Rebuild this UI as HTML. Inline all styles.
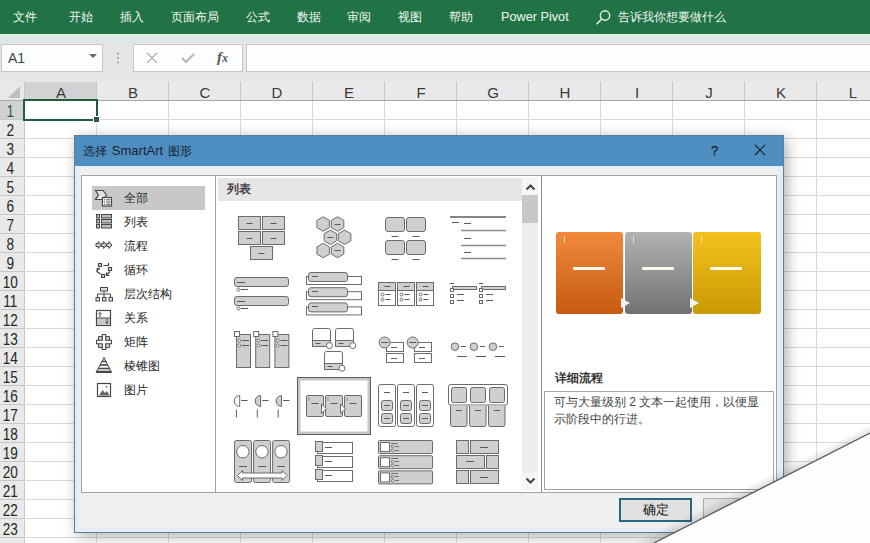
<!DOCTYPE html><html><head><meta charset="utf-8"><style>
*{margin:0;padding:0;box-sizing:border-box}
html,body{width:870px;height:543px;overflow:hidden;background:#fff}
body{position:relative;font-family:"Liberation Sans",sans-serif;color:#222}
.a{position:absolute}
.t{position:absolute;white-space:nowrap}
.rib span{position:absolute;top:9px;font-size:12px;line-height:16px;color:#f2f7f3;white-space:nowrap}
.box{position:absolute;background:#fbfdfe;border:1px solid #c6c6c6;border-top-color:#d4c4c2}
.ch{position:absolute;top:83px;height:18px;width:72px;text-align:center;font-size:15px;line-height:19px;color:#3a3a3a}
.rn{position:absolute;left:0;width:24px;text-align:center;font-size:16px;line-height:24px;color:#262626;transform:scaleX(0.85);transform-origin:0 0}
.cat{position:absolute;left:124px;font-size:12px;line-height:16px;color:#262626}
</style></head><body>
<div class="a" style="left:0;top:82px;width:870px;height:461px;background:#fff"></div>
<div class="a" style="left:0;top:82px;width:870px;height:18px;background:#e9e9e9"></div>
<div class="a" style="left:24px;top:82px;width:72px;height:18px;background:#d2d2d2"></div>
<div class="a" style="left:0;top:100px;width:870px;height:1px;background:#a9a9a9"></div>
<div class="a" style="left:0;top:101px;width:24px;height:442px;background:#e9e9e9"></div>
<div class="a" style="left:0;top:101px;width:24px;height:18px;background:#d2d2d2"></div>
<svg class="a" style="left:0;top:82px" width="24" height="18"><polygon points="20,4 20,16 8,16" fill="#bfbfbf"/></svg>
<div class="a" style="left:96px;top:82px;width:1px;height:18px;background:#c6c6c6"></div>
<div class="a" style="left:96px;top:101px;width:1px;height:442px;background:#d9d9d9"></div>
<div class="a" style="left:168px;top:82px;width:1px;height:18px;background:#c6c6c6"></div>
<div class="a" style="left:168px;top:101px;width:1px;height:442px;background:#d9d9d9"></div>
<div class="a" style="left:240px;top:82px;width:1px;height:18px;background:#c6c6c6"></div>
<div class="a" style="left:240px;top:101px;width:1px;height:442px;background:#d9d9d9"></div>
<div class="a" style="left:312px;top:82px;width:1px;height:18px;background:#c6c6c6"></div>
<div class="a" style="left:312px;top:101px;width:1px;height:442px;background:#d9d9d9"></div>
<div class="a" style="left:384px;top:82px;width:1px;height:18px;background:#c6c6c6"></div>
<div class="a" style="left:384px;top:101px;width:1px;height:442px;background:#d9d9d9"></div>
<div class="a" style="left:456px;top:82px;width:1px;height:18px;background:#c6c6c6"></div>
<div class="a" style="left:456px;top:101px;width:1px;height:442px;background:#d9d9d9"></div>
<div class="a" style="left:528px;top:82px;width:1px;height:18px;background:#c6c6c6"></div>
<div class="a" style="left:528px;top:101px;width:1px;height:442px;background:#d9d9d9"></div>
<div class="a" style="left:600px;top:82px;width:1px;height:18px;background:#c6c6c6"></div>
<div class="a" style="left:600px;top:101px;width:1px;height:442px;background:#d9d9d9"></div>
<div class="a" style="left:672px;top:82px;width:1px;height:18px;background:#c6c6c6"></div>
<div class="a" style="left:672px;top:101px;width:1px;height:442px;background:#d9d9d9"></div>
<div class="a" style="left:744px;top:82px;width:1px;height:18px;background:#c6c6c6"></div>
<div class="a" style="left:744px;top:101px;width:1px;height:442px;background:#d9d9d9"></div>
<div class="a" style="left:816px;top:82px;width:1px;height:18px;background:#c6c6c6"></div>
<div class="a" style="left:816px;top:101px;width:1px;height:442px;background:#d9d9d9"></div>
<div class="a" style="left:888px;top:82px;width:1px;height:18px;background:#c6c6c6"></div>
<div class="a" style="left:888px;top:101px;width:1px;height:442px;background:#d9d9d9"></div>
<div class="a" style="left:24px;top:82px;width:1px;height:461px;background:#c6c6c6"></div>
<div class="a" style="left:24px;top:119px;width:846px;height:1px;background:#d9d9d9"></div>
<div class="a" style="left:0;top:119px;width:24px;height:1px;background:#c6c6c6"></div>
<div class="a" style="left:24px;top:138px;width:846px;height:1px;background:#d9d9d9"></div>
<div class="a" style="left:0;top:138px;width:24px;height:1px;background:#c6c6c6"></div>
<div class="a" style="left:24px;top:157px;width:846px;height:1px;background:#d9d9d9"></div>
<div class="a" style="left:0;top:157px;width:24px;height:1px;background:#c6c6c6"></div>
<div class="a" style="left:24px;top:176px;width:846px;height:1px;background:#d9d9d9"></div>
<div class="a" style="left:0;top:176px;width:24px;height:1px;background:#c6c6c6"></div>
<div class="a" style="left:24px;top:195px;width:846px;height:1px;background:#d9d9d9"></div>
<div class="a" style="left:0;top:195px;width:24px;height:1px;background:#c6c6c6"></div>
<div class="a" style="left:24px;top:214px;width:846px;height:1px;background:#d9d9d9"></div>
<div class="a" style="left:0;top:214px;width:24px;height:1px;background:#c6c6c6"></div>
<div class="a" style="left:24px;top:233px;width:846px;height:1px;background:#d9d9d9"></div>
<div class="a" style="left:0;top:233px;width:24px;height:1px;background:#c6c6c6"></div>
<div class="a" style="left:24px;top:252px;width:846px;height:1px;background:#d9d9d9"></div>
<div class="a" style="left:0;top:252px;width:24px;height:1px;background:#c6c6c6"></div>
<div class="a" style="left:24px;top:271px;width:846px;height:1px;background:#d9d9d9"></div>
<div class="a" style="left:0;top:271px;width:24px;height:1px;background:#c6c6c6"></div>
<div class="a" style="left:24px;top:290px;width:846px;height:1px;background:#d9d9d9"></div>
<div class="a" style="left:0;top:290px;width:24px;height:1px;background:#c6c6c6"></div>
<div class="a" style="left:24px;top:309px;width:846px;height:1px;background:#d9d9d9"></div>
<div class="a" style="left:0;top:309px;width:24px;height:1px;background:#c6c6c6"></div>
<div class="a" style="left:24px;top:328px;width:846px;height:1px;background:#d9d9d9"></div>
<div class="a" style="left:0;top:328px;width:24px;height:1px;background:#c6c6c6"></div>
<div class="a" style="left:24px;top:347px;width:846px;height:1px;background:#d9d9d9"></div>
<div class="a" style="left:0;top:347px;width:24px;height:1px;background:#c6c6c6"></div>
<div class="a" style="left:24px;top:366px;width:846px;height:1px;background:#d9d9d9"></div>
<div class="a" style="left:0;top:366px;width:24px;height:1px;background:#c6c6c6"></div>
<div class="a" style="left:24px;top:385px;width:846px;height:1px;background:#d9d9d9"></div>
<div class="a" style="left:0;top:385px;width:24px;height:1px;background:#c6c6c6"></div>
<div class="a" style="left:24px;top:404px;width:846px;height:1px;background:#d9d9d9"></div>
<div class="a" style="left:0;top:404px;width:24px;height:1px;background:#c6c6c6"></div>
<div class="a" style="left:24px;top:423px;width:846px;height:1px;background:#d9d9d9"></div>
<div class="a" style="left:0;top:423px;width:24px;height:1px;background:#c6c6c6"></div>
<div class="a" style="left:24px;top:442px;width:846px;height:1px;background:#d9d9d9"></div>
<div class="a" style="left:0;top:442px;width:24px;height:1px;background:#c6c6c6"></div>
<div class="a" style="left:24px;top:461px;width:846px;height:1px;background:#d9d9d9"></div>
<div class="a" style="left:0;top:461px;width:24px;height:1px;background:#c6c6c6"></div>
<div class="a" style="left:24px;top:480px;width:846px;height:1px;background:#d9d9d9"></div>
<div class="a" style="left:0;top:480px;width:24px;height:1px;background:#c6c6c6"></div>
<div class="a" style="left:24px;top:499px;width:846px;height:1px;background:#d9d9d9"></div>
<div class="a" style="left:0;top:499px;width:24px;height:1px;background:#c6c6c6"></div>
<div class="a" style="left:24px;top:518px;width:846px;height:1px;background:#d9d9d9"></div>
<div class="a" style="left:0;top:518px;width:24px;height:1px;background:#c6c6c6"></div>
<div class="a" style="left:24px;top:537px;width:846px;height:1px;background:#d9d9d9"></div>
<div class="a" style="left:0;top:537px;width:24px;height:1px;background:#c6c6c6"></div>
<div class="ch" style="left:25px;color:#3a3a3a">A</div>
<div class="ch" style="left:97px;color:#3a3a3a">B</div>
<div class="ch" style="left:169px;color:#3a3a3a">C</div>
<div class="ch" style="left:241px;color:#3a3a3a">D</div>
<div class="ch" style="left:313px;color:#3a3a3a">E</div>
<div class="ch" style="left:385px;color:#3a3a3a">F</div>
<div class="ch" style="left:457px;color:#3a3a3a">G</div>
<div class="ch" style="left:529px;color:#3a3a3a">H</div>
<div class="ch" style="left:601px;color:#3a3a3a">I</div>
<div class="ch" style="left:673px;color:#3a3a3a">J</div>
<div class="ch" style="left:745px;color:#3a3a3a">K</div>
<div class="ch" style="left:817px;color:#3a3a3a">L</div>
<div class="rn" style="top:100px;height:19px;color:#2b5e40">1</div>
<div class="rn" style="top:119px;height:19px;color:#262626">2</div>
<div class="rn" style="top:138px;height:19px;color:#262626">3</div>
<div class="rn" style="top:157px;height:19px;color:#262626">4</div>
<div class="rn" style="top:176px;height:19px;color:#262626">5</div>
<div class="rn" style="top:195px;height:19px;color:#262626">6</div>
<div class="rn" style="top:214px;height:19px;color:#262626">7</div>
<div class="rn" style="top:233px;height:19px;color:#262626">8</div>
<div class="rn" style="top:252px;height:19px;color:#262626">9</div>
<div class="rn" style="top:271px;height:19px;color:#262626">10</div>
<div class="rn" style="top:290px;height:19px;color:#262626">11</div>
<div class="rn" style="top:309px;height:19px;color:#262626">12</div>
<div class="rn" style="top:328px;height:19px;color:#262626">13</div>
<div class="rn" style="top:347px;height:19px;color:#262626">14</div>
<div class="rn" style="top:366px;height:19px;color:#262626">15</div>
<div class="rn" style="top:385px;height:19px;color:#262626">16</div>
<div class="rn" style="top:404px;height:19px;color:#262626">17</div>
<div class="rn" style="top:423px;height:19px;color:#262626">18</div>
<div class="rn" style="top:442px;height:19px;color:#262626">19</div>
<div class="rn" style="top:461px;height:19px;color:#262626">20</div>
<div class="rn" style="top:480px;height:19px;color:#262626">21</div>
<div class="rn" style="top:499px;height:19px;color:#262626">22</div>
<div class="rn" style="top:518px;height:19px;color:#262626">23</div>
<div class="a" style="left:23px;top:99px;width:75px;height:22px;border:2px solid #245c3b"></div>
<div class="a" style="left:94px;top:117px;width:5px;height:5px;background:#245c3b;border:1px solid #fff;box-sizing:content-box;margin:-1px"></div>
<div class="a rib" style="left:0;top:0;width:870px;height:34px;background:#217346">
<span style="left:13px">文件</span>
<span style="left:69px">开始</span>
<span style="left:120px">插入</span>
<span style="left:171px">页面布局</span>
<span style="left:246px">公式</span>
<span style="left:297px">数据</span>
<span style="left:347px">审阅</span>
<span style="left:398px">视图</span>
<span style="left:449px">帮助</span>
<span style="left:501px;font-size:12.7px;top:9px">Power Pivot</span>
<span style="left:618px">告诉我你想要做什么</span>
</div>
<svg class="a" style="left:594px;top:9px" width="18" height="18" viewBox="0 0 18 18"><circle cx="11" cy="6.5" r="4.7" fill="none" stroke="#e8f4ec" stroke-width="1.4"/><line x1="7.7" y1="9.9" x2="2.6" y2="15.3" stroke="#e8f4ec" stroke-width="1.5"/></svg>
<div class="a" style="left:0;top:34px;width:870px;height:48px;background:#e6e6e6"></div>
<div class="a" style="left:0;top:34px;width:870px;height:2px;background:#dcefe0"></div>
<div class="a" style="left:0;top:36px;width:870px;height:2px;background:#e6e4ea"></div>
<div class="a" style="left:0;top:38px;width:870px;height:5px;background:#dde8e6"></div>
<div class="box" style="left:1px;top:44px;width:102px;height:28px"></div>
<div class="t" style="left:8px;top:50px;font-size:14px;line-height:16px;color:#444">A1</div>
<svg class="a" style="left:88px;top:53px" width="10" height="6"><polygon points="1,1 9,1 5,5" fill="#666"/></svg>
<svg class="a" style="left:115px;top:51px" width="6" height="14"><circle cx="3" cy="2.5" r="1" fill="#999"/><circle cx="3" cy="7" r="1" fill="#999"/><circle cx="3" cy="11.5" r="1" fill="#999"/></svg>
<div class="box" style="left:133px;top:44px;width:110px;height:28px"></div>
<svg class="a" style="left:145px;top:51px" width="14" height="14"><path d="M2 2 L12 12 M12 2 L2 12" stroke="#b5b5b5" stroke-width="1.5"/></svg>
<svg class="a" style="left:180px;top:51px" width="16" height="14"><path d="M2 7 L6 11 L14 3" fill="none" stroke="#b5b5b5" stroke-width="2"/></svg>
<div class="t" style="left:217px;top:49px;font-family:'Liberation Serif',serif;font-style:italic;font-weight:bold;font-size:15px;line-height:16px;color:#555">f<span style="font-size:12px">x</span></div>
<div class="box" style="left:246px;top:44px;width:630px;height:28px"></div>
<div class="a" style="left:74px;top:135px;width:710px;height:398px;background:#e4edf5;border:1px solid #5d7d98;box-shadow:3px 3px 14px rgba(0,0,0,0.32)"></div>
<div class="a" style="left:79px;top:168px;width:698px;height:360px;background:#f0f0f0"></div>
<div class="a" style="left:75px;top:136px;width:708px;height:30px;background:#4e8ec1"></div>
<div class="a" style="left:75px;top:166px;width:708px;height:1px;background:#e3f0f8"></div>
<div class="t" style="left:83px;top:142px;font-size:12px;line-height:17px;color:#1b2233;word-spacing:1.5px">选择 <span style="font-size:13px">SmartArt</span> 图形</div>
<div class="t" style="left:711px;top:142px;font-size:13px;line-height:17px;color:#1b2233;font-weight:normal;-webkit-text-stroke:0.3px #1b2233">?</div>
<svg class="a" style="left:754px;top:144px" width="12" height="12"><path d="M1 1 L11 11 M11 1 L1 11" stroke="#1b2233" stroke-width="1.2"/></svg>
<div class="a" style="left:81px;top:175px;width:696px;height:318px;background:#fff;border:1px solid #a3a3a3"></div>
<div class="a" style="left:215px;top:176px;width:1px;height:316px;background:#a3a3a3"></div>
<div class="a" style="left:541px;top:176px;width:1px;height:316px;background:#8a8a8a"></div>
<div class="a" style="left:92px;top:186px;width:113px;height:24px;background:#c8c8c8"></div>
<div class="cat" style="top:190px">全部</div>
<div class="cat" style="top:214px">列表</div>
<div class="cat" style="top:238px">流程</div>
<div class="cat" style="top:262px">循环</div>
<div class="cat" style="top:286px">层次结构</div>
<div class="cat" style="top:310px">关系</div>
<div class="cat" style="top:334px">矩阵</div>
<div class="cat" style="top:358px">棱锥图</div>
<div class="cat" style="top:382px">图片</div>
<div class="a" style="left:218px;top:178px;width:304px;height:23px;background:#e6e6e6"></div>
<div class="t" style="left:227px;top:181px;font-size:12px;line-height:16px;color:#444;font-weight:bold">列表</div>
<div class="a" style="left:522px;top:177px;width:16px;height:314px;background:#ededed"></div>
<div class="a" style="left:522px;top:177px;width:16px;height:18px;background:#f6f6f6"></div><div class="a" style="left:522px;top:473px;width:16px;height:18px;background:#f6f6f6"></div>
<div class="a" style="left:522px;top:195px;width:16px;height:28px;background:#c8c8c8"></div>
<svg class="a" style="left:525px;top:183px" width="11" height="8"><path d="M1.5 6.5 L5.5 2.5 L9.5 6.5" fill="none" stroke="#444" stroke-width="2"/></svg>
<svg class="a" style="left:525px;top:477px" width="11" height="8"><path d="M1.5 1.5 L5.5 5.5 L9.5 1.5" fill="none" stroke="#444" stroke-width="2"/></svg>
<div class="a" style="left:556px;top:232px;width:67px;height:82px;border-radius:3px;background:linear-gradient(#f08a3a,#c65a12)"></div>
<div class="a" style="left:573px;top:267px;width:32px;height:3px;background:#fff8ee;border-radius:1px"></div>
<div class="a" style="left:564px;top:236px;width:1px;height:7px;background:rgba(255,255,255,0.6)"></div>
<div class="a" style="left:625px;top:232px;width:67px;height:82px;border-radius:3px;background:linear-gradient(#b2b2b2,#727272)"></div>
<div class="a" style="left:642px;top:267px;width:32px;height:3px;background:#fff8ee;border-radius:1px"></div>
<div class="a" style="left:633px;top:236px;width:1px;height:7px;background:rgba(255,255,255,0.6)"></div>
<div class="a" style="left:693px;top:232px;width:68px;height:82px;border-radius:3px;background:linear-gradient(#f4c11e,#c99a02)"></div>
<div class="a" style="left:710px;top:267px;width:32px;height:3px;background:#fff8ee;border-radius:1px"></div>
<div class="a" style="left:701px;top:236px;width:1px;height:7px;background:rgba(255,255,255,0.6)"></div>
<svg class="a" style="left:620px;top:297px" width="11" height="12"><polygon points="1,1 10,6 1,11" fill="#f4f4f4"/></svg>
<svg class="a" style="left:689px;top:297px" width="11" height="12"><polygon points="1,1 10,6 1,11" fill="#f4f4f4"/></svg>
<div class="t" style="left:555px;top:370px;font-size:12px;line-height:16px;color:#333;font-weight:bold">详细流程</div>
<div class="a" style="left:544px;top:391px;width:230px;height:99px;border:1px solid #a3a3a3;background:#fff"></div>
<div class="t" style="left:554px;top:394px;font-size:12px;line-height:17px;color:#444">可与大量级别 2 文本一起使用，以便显<br>示阶段中的行进。</div>
<div class="a" style="left:619px;top:498px;width:73px;height:24px;background:#e1e1e1;border:2px solid #2a6680"></div>
<div class="t" style="left:643px;top:502px;font-size:12.5px;line-height:17px;color:#111">确定</div>
<div class="a" style="left:703px;top:498px;width:73px;height:24px;background:#e1e1e1;border:1px solid #adadad"></div>
<svg class="a" style="left:0;top:0" width="870" height="543"><defs><clipPath id="mp"><rect x="216" y="201" width="306" height="290"/></clipPath></defs><g clip-path="url(#mp)"><rect x="238.5" y="216.5" width="22.0" height="13.0" rx="0" fill="#cfcfcf" stroke="#6b6b6b" stroke-width="1"/><line x1="246.5" y1="223.5" x2="252.5" y2="223.5" stroke="#5a5a5a" stroke-width="1"/><rect x="262.5" y="216.5" width="22.0" height="13.0" rx="0" fill="#cfcfcf" stroke="#6b6b6b" stroke-width="1"/><line x1="270.5" y1="223.5" x2="276.5" y2="223.5" stroke="#5a5a5a" stroke-width="1"/><rect x="238.5" y="231.5" width="22.0" height="13.0" rx="0" fill="#cfcfcf" stroke="#6b6b6b" stroke-width="1"/><line x1="246.5" y1="238.5" x2="252.5" y2="238.5" stroke="#5a5a5a" stroke-width="1"/><rect x="262.5" y="231.5" width="22.0" height="13.0" rx="0" fill="#cfcfcf" stroke="#6b6b6b" stroke-width="1"/><line x1="270.5" y1="238.5" x2="276.5" y2="238.5" stroke="#5a5a5a" stroke-width="1"/><rect x="250.5" y="246.5" width="22.0" height="13.0" rx="0" fill="#cfcfcf" stroke="#6b6b6b" stroke-width="1"/><line x1="258.5" y1="253.5" x2="264.5" y2="253.5" stroke="#5a5a5a" stroke-width="1"/><polygon points="323.20,216.80 329.44,220.40 329.44,227.60 323.20,231.20 316.96,227.60 316.96,220.40" fill="#cfcfcf" stroke="#6b6b6b" stroke-width="1"/><polygon points="337.60,216.80 343.84,220.40 343.84,227.60 337.60,231.20 331.36,227.60 331.36,220.40" fill="#cfcfcf" stroke="#6b6b6b" stroke-width="1"/><line x1="334.6" y1="224.5" x2="340.6" y2="224.5" stroke="#5a5a5a" stroke-width="1"/><polygon points="330.40,230.10 336.64,233.70 336.64,240.90 330.40,244.50 324.16,240.90 324.16,233.70" fill="#cfcfcf" stroke="#6b6b6b" stroke-width="1"/><line x1="327.4" y1="237.5" x2="333.4" y2="237.5" stroke="#5a5a5a" stroke-width="1"/><polygon points="344.60,230.10 350.84,233.70 350.84,240.90 344.60,244.50 338.36,240.90 338.36,233.70" fill="#cfcfcf" stroke="#6b6b6b" stroke-width="1"/><polygon points="323.20,243.30 329.44,246.90 329.44,254.10 323.20,257.70 316.96,254.10 316.96,246.90" fill="#cfcfcf" stroke="#6b6b6b" stroke-width="1"/><polygon points="337.60,243.30 343.84,246.90 343.84,254.10 337.60,257.70 331.36,254.10 331.36,246.90" fill="#cfcfcf" stroke="#6b6b6b" stroke-width="1"/><line x1="334.6" y1="250.5" x2="340.6" y2="250.5" stroke="#5a5a5a" stroke-width="1"/><rect x="385.5" y="217.5" width="19.0" height="14.0" rx="2.5" fill="#cfcfcf" stroke="#6b6b6b" stroke-width="1"/><line x1="391.5" y1="236.5" x2="398.5" y2="236.5" stroke="#5a5a5a" stroke-width="1"/><rect x="406.5" y="217.5" width="19.0" height="14.0" rx="2.5" fill="#cfcfcf" stroke="#6b6b6b" stroke-width="1"/><line x1="412.5" y1="236.5" x2="419.5" y2="236.5" stroke="#5a5a5a" stroke-width="1"/><rect x="385.5" y="240.5" width="19.0" height="14.0" rx="2.5" fill="#cfcfcf" stroke="#6b6b6b" stroke-width="1"/><line x1="391.5" y1="259.5" x2="398.5" y2="259.5" stroke="#5a5a5a" stroke-width="1"/><rect x="406.5" y="240.5" width="19.0" height="14.0" rx="2.5" fill="#cfcfcf" stroke="#6b6b6b" stroke-width="1"/><line x1="412.5" y1="259.5" x2="419.5" y2="259.5" stroke="#5a5a5a" stroke-width="1"/><line x1="450" y1="217" x2="506" y2="217" stroke="#858585" stroke-width="2.2"/><line x1="452" y1="222.5" x2="459" y2="222.5" stroke="#5a5a5a" stroke-width="1"/><line x1="464" y1="223.5" x2="471" y2="223.5" stroke="#5a5a5a" stroke-width="1"/><line x1="464" y1="238.5" x2="471" y2="238.5" stroke="#5a5a5a" stroke-width="1"/><line x1="464" y1="252.5" x2="471" y2="252.5" stroke="#5a5a5a" stroke-width="1"/><line x1="461" y1="230.5" x2="506" y2="230.5" stroke="#8a8a8a" stroke-width="1.4"/><line x1="461" y1="245.5" x2="506" y2="245.5" stroke="#8a8a8a" stroke-width="1.4"/><line x1="461" y1="258.5" x2="506" y2="258.5" stroke="#8a8a8a" stroke-width="1.4"/><rect x="234.5" y="277.5" width="54.0" height="9.0" rx="2.5" fill="#cfcfcf" stroke="#6b6b6b" stroke-width="1"/><line x1="237" y1="282.5" x2="245" y2="282.5" stroke="#5a5a5a" stroke-width="1"/><circle cx="238.5" cy="289.5" r="1.6" fill="#fff" stroke="#6b6b6b" stroke-width="1"/><line x1="241" y1="289.5" x2="248" y2="289.5" stroke="#5a5a5a" stroke-width="1"/><rect x="234.5" y="296.5" width="54.0" height="9.0" rx="2.5" fill="#cfcfcf" stroke="#6b6b6b" stroke-width="1"/><line x1="237" y1="301.5" x2="245" y2="301.5" stroke="#5a5a5a" stroke-width="1"/><circle cx="238.5" cy="308.5" r="1.6" fill="#fff" stroke="#6b6b6b" stroke-width="1"/><line x1="241" y1="308.5" x2="248" y2="308.5" stroke="#5a5a5a" stroke-width="1"/><rect x="306.5" y="276.5" width="55.0" height="8.0" rx="0" fill="#fff" stroke="#6b6b6b" stroke-width="1"/><rect x="308.5" y="272.5" width="39.0" height="9.0" rx="2.5" fill="#cfcfcf" stroke="#6b6b6b" stroke-width="1"/><line x1="312" y1="276.5" x2="318" y2="276.5" stroke="#5a5a5a" stroke-width="1"/><rect x="306.5" y="291.7" width="55.0" height="8.0" rx="0" fill="#fff" stroke="#6b6b6b" stroke-width="1"/><rect x="308.5" y="287.7" width="39.0" height="9.0" rx="2.5" fill="#cfcfcf" stroke="#6b6b6b" stroke-width="1"/><line x1="312" y1="291.5" x2="318" y2="291.5" stroke="#5a5a5a" stroke-width="1"/><rect x="306.5" y="306.9" width="55.0" height="8.0" rx="0" fill="#fff" stroke="#6b6b6b" stroke-width="1"/><rect x="308.5" y="302.9" width="39.0" height="9.0" rx="2.5" fill="#cfcfcf" stroke="#6b6b6b" stroke-width="1"/><line x1="312" y1="306.5" x2="318" y2="306.5" stroke="#5a5a5a" stroke-width="1"/><rect x="378.5" y="282.5" width="17.0" height="23.0" rx="0" fill="#fff" stroke="#6b6b6b" stroke-width="1"/><rect x="378.5" y="282.5" width="17.0" height="8.0" rx="0" fill="#cfcfcf" stroke="#6b6b6b" stroke-width="1"/><line x1="384.5" y1="286.5" x2="390.5" y2="286.5" stroke="#5a5a5a" stroke-width="1"/><circle cx="382.5" cy="294.5" r="1.5" fill="#fff" stroke="#6b6b6b" stroke-width="1"/><circle cx="382.5" cy="299.5" r="1.5" fill="#fff" stroke="#6b6b6b" stroke-width="1"/><line x1="385.5" y1="294.5" x2="390.5" y2="294.5" stroke="#5a5a5a" stroke-width="1"/><line x1="385.5" y1="299.5" x2="390.5" y2="299.5" stroke="#5a5a5a" stroke-width="1"/><rect x="397.5" y="282.5" width="17.0" height="23.0" rx="0" fill="#fff" stroke="#6b6b6b" stroke-width="1"/><rect x="397.5" y="282.5" width="17.0" height="8.0" rx="0" fill="#cfcfcf" stroke="#6b6b6b" stroke-width="1"/><line x1="403.5" y1="286.5" x2="409.5" y2="286.5" stroke="#5a5a5a" stroke-width="1"/><circle cx="401.5" cy="294.5" r="1.5" fill="#fff" stroke="#6b6b6b" stroke-width="1"/><circle cx="401.5" cy="299.5" r="1.5" fill="#fff" stroke="#6b6b6b" stroke-width="1"/><line x1="404.5" y1="294.5" x2="409.5" y2="294.5" stroke="#5a5a5a" stroke-width="1"/><line x1="404.5" y1="299.5" x2="409.5" y2="299.5" stroke="#5a5a5a" stroke-width="1"/><rect x="416.5" y="282.5" width="17.0" height="23.0" rx="0" fill="#fff" stroke="#6b6b6b" stroke-width="1"/><rect x="416.5" y="282.5" width="17.0" height="8.0" rx="0" fill="#cfcfcf" stroke="#6b6b6b" stroke-width="1"/><line x1="422.5" y1="286.5" x2="428.5" y2="286.5" stroke="#5a5a5a" stroke-width="1"/><circle cx="420.5" cy="294.5" r="1.5" fill="#fff" stroke="#6b6b6b" stroke-width="1"/><circle cx="420.5" cy="299.5" r="1.5" fill="#fff" stroke="#6b6b6b" stroke-width="1"/><line x1="423.5" y1="294.5" x2="428.5" y2="294.5" stroke="#5a5a5a" stroke-width="1"/><line x1="423.5" y1="299.5" x2="428.5" y2="299.5" stroke="#5a5a5a" stroke-width="1"/><line x1="450" y1="283.5" x2="454" y2="283.5" stroke="#5a5a5a" stroke-width="1"/><rect x="452.5" y="286.5" width="24.0" height="3.0" rx="0" fill="#cfcfcf" stroke="#6b6b6b" stroke-width="1"/><rect x="450.5" y="288.5" width="3.0" height="3.0" rx="0" fill="#fff" stroke="#6b6b6b" stroke-width="1"/><rect x="450.5" y="294.5" width="3.0" height="3.0" rx="0" fill="#fff" stroke="#6b6b6b" stroke-width="1"/><rect x="450.5" y="300.5" width="3.0" height="3.0" rx="0" fill="#fff" stroke="#6b6b6b" stroke-width="1"/><line x1="457" y1="294.5" x2="464" y2="294.5" stroke="#5a5a5a" stroke-width="1"/><line x1="457" y1="300.5" x2="464" y2="300.5" stroke="#5a5a5a" stroke-width="1"/><line x1="479" y1="283.5" x2="483" y2="283.5" stroke="#5a5a5a" stroke-width="1"/><rect x="481.5" y="286.5" width="24.0" height="3.0" rx="0" fill="#cfcfcf" stroke="#6b6b6b" stroke-width="1"/><rect x="479.5" y="288.5" width="3.0" height="3.0" rx="0" fill="#fff" stroke="#6b6b6b" stroke-width="1"/><rect x="479.5" y="294.5" width="3.0" height="3.0" rx="0" fill="#fff" stroke="#6b6b6b" stroke-width="1"/><rect x="479.5" y="300.5" width="3.0" height="3.0" rx="0" fill="#fff" stroke="#6b6b6b" stroke-width="1"/><line x1="486" y1="294.5" x2="493" y2="294.5" stroke="#5a5a5a" stroke-width="1"/><line x1="486" y1="300.5" x2="493" y2="300.5" stroke="#5a5a5a" stroke-width="1"/><rect x="236.5" y="334.5" width="14.0" height="33.0" rx="0" fill="#cfcfcf" stroke="#6b6b6b" stroke-width="1"/><rect x="234.5" y="331.5" width="5.0" height="5.0" rx="0" fill="#fff" stroke="#6b6b6b" stroke-width="1"/><circle cx="239.3" cy="340.5" r="1.5" fill="#fff" stroke="#6b6b6b" stroke-width="1"/><circle cx="239.3" cy="345.5" r="1.5" fill="#fff" stroke="#6b6b6b" stroke-width="1"/><line x1="242.0" y1="340.5" x2="249.0" y2="340.5" stroke="#5a5a5a" stroke-width="1"/><line x1="242.0" y1="345.5" x2="249.0" y2="345.5" stroke="#5a5a5a" stroke-width="1"/><rect x="255.7" y="334.5" width="14.0" height="33.0" rx="0" fill="#cfcfcf" stroke="#6b6b6b" stroke-width="1"/><rect x="253.7" y="331.5" width="5.0" height="5.0" rx="0" fill="#fff" stroke="#6b6b6b" stroke-width="1"/><circle cx="258.5" cy="340.5" r="1.5" fill="#fff" stroke="#6b6b6b" stroke-width="1"/><circle cx="258.5" cy="345.5" r="1.5" fill="#fff" stroke="#6b6b6b" stroke-width="1"/><line x1="261.2" y1="340.5" x2="268.2" y2="340.5" stroke="#5a5a5a" stroke-width="1"/><line x1="261.2" y1="345.5" x2="268.2" y2="345.5" stroke="#5a5a5a" stroke-width="1"/><rect x="274.9" y="334.5" width="14.0" height="33.0" rx="0" fill="#cfcfcf" stroke="#6b6b6b" stroke-width="1"/><rect x="272.9" y="331.5" width="5.0" height="5.0" rx="0" fill="#fff" stroke="#6b6b6b" stroke-width="1"/><circle cx="277.7" cy="340.5" r="1.5" fill="#fff" stroke="#6b6b6b" stroke-width="1"/><circle cx="277.7" cy="345.5" r="1.5" fill="#fff" stroke="#6b6b6b" stroke-width="1"/><line x1="280.4" y1="340.5" x2="287.4" y2="340.5" stroke="#5a5a5a" stroke-width="1"/><line x1="280.4" y1="345.5" x2="287.4" y2="345.5" stroke="#5a5a5a" stroke-width="1"/><path d="M312.5 340.5 V330.5 Q312.5 328.5 314.5 328.5 H328.5 Q330.5 328.5 330.5 330.5 V346.5 H312.5 Z" fill="#fff" stroke="#6b6b6b" stroke-width="1"/><rect x="312.5" y="340.5" width="18.0" height="6.0" rx="0" fill="#cfcfcf" stroke="#6b6b6b" stroke-width="1"/><line x1="315.5" y1="343.5" x2="320.5" y2="343.5" stroke="#5a5a5a" stroke-width="1"/><circle cx="329.4" cy="345.6" r="3" fill="#fff" stroke="#6b6b6b" stroke-width="1"/><path d="M335.5 340.5 V330.5 Q335.5 328.5 337.5 328.5 H351.5 Q353.5 328.5 353.5 330.5 V346.5 H335.5 Z" fill="#fff" stroke="#6b6b6b" stroke-width="1"/><rect x="335.5" y="340.5" width="18.0" height="6.0" rx="0" fill="#cfcfcf" stroke="#6b6b6b" stroke-width="1"/><line x1="338.5" y1="343.5" x2="343.5" y2="343.5" stroke="#5a5a5a" stroke-width="1"/><circle cx="352.8" cy="345.6" r="3" fill="#fff" stroke="#6b6b6b" stroke-width="1"/><path d="M324.5 363.5 V353.5 Q324.5 351.5 326.5 351.5 H340.5 Q342.5 351.5 342.5 353.5 V369.5 H324.5 Z" fill="#fff" stroke="#6b6b6b" stroke-width="1"/><rect x="324.5" y="363.5" width="18.0" height="6.0" rx="0" fill="#cfcfcf" stroke="#6b6b6b" stroke-width="1"/><line x1="327.5" y1="366.5" x2="332.5" y2="366.5" stroke="#5a5a5a" stroke-width="1"/><circle cx="341.9" cy="368.3" r="3" fill="#fff" stroke="#6b6b6b" stroke-width="1"/><rect x="386.5" y="342.5" width="17.0" height="9.0" rx="0" fill="#fff" stroke="#6b6b6b" stroke-width="1"/><rect x="386.5" y="353.5" width="17.0" height="9.0" rx="0" fill="#fff" stroke="#6b6b6b" stroke-width="1"/><circle cx="384.6" cy="342.5" r="5.5" fill="#cfcfcf" stroke="#6b6b6b" stroke-width="1"/><line x1="381" y1="342.5" x2="388" y2="342.5" stroke="#5a5a5a" stroke-width="1"/><line x1="391" y1="347.5" x2="397" y2="347.5" stroke="#5a5a5a" stroke-width="1"/><line x1="391" y1="358.5" x2="397" y2="358.5" stroke="#5a5a5a" stroke-width="1"/><rect x="414.5" y="342.5" width="17.0" height="9.0" rx="0" fill="#fff" stroke="#6b6b6b" stroke-width="1"/><rect x="414.5" y="353.5" width="17.0" height="9.0" rx="0" fill="#fff" stroke="#6b6b6b" stroke-width="1"/><circle cx="412.6" cy="342.5" r="5.5" fill="#cfcfcf" stroke="#6b6b6b" stroke-width="1"/><line x1="409" y1="342.5" x2="416" y2="342.5" stroke="#5a5a5a" stroke-width="1"/><line x1="419" y1="347.5" x2="425" y2="347.5" stroke="#5a5a5a" stroke-width="1"/><line x1="419" y1="358.5" x2="425" y2="358.5" stroke="#5a5a5a" stroke-width="1"/><circle cx="454.9" cy="346.7" r="3.8" fill="#cfcfcf" stroke="#6b6b6b" stroke-width="1"/><line x1="460.9" y1="346.5" x2="465.9" y2="346.5" stroke="#5a5a5a" stroke-width="1"/><line x1="456.9" y1="356.5" x2="466.9" y2="356.5" stroke="#5a5a5a" stroke-width="1"/><circle cx="473.9" cy="346.7" r="3.8" fill="#cfcfcf" stroke="#6b6b6b" stroke-width="1"/><line x1="479.9" y1="346.5" x2="484.9" y2="346.5" stroke="#5a5a5a" stroke-width="1"/><line x1="475.9" y1="356.5" x2="485.9" y2="356.5" stroke="#5a5a5a" stroke-width="1"/><circle cx="492.9" cy="346.7" r="3.8" fill="#cfcfcf" stroke="#6b6b6b" stroke-width="1"/><line x1="498.9" y1="346.5" x2="503.9" y2="346.5" stroke="#5a5a5a" stroke-width="1"/><line x1="494.9" y1="356.5" x2="504.9" y2="356.5" stroke="#5a5a5a" stroke-width="1"/><path d="M239.7 395.5 A6.6 5.6 0 0 0 239.7 406.5 Z" fill="#fff" stroke="#6b6b6b" stroke-width="1"/><line x1="241.29999999999998" y1="400.5" x2="247.7" y2="400.5" stroke="#5a5a5a" stroke-width="1"/><line x1="236.39999999999998" y1="409.5" x2="236.39999999999998" y2="417.5" stroke="#5a5a5a" stroke-width="1"/><path d="M260.59999999999997 395.5 A6.6 5.6 0 0 0 260.59999999999997 406.5 Z" fill="#cfcfcf" stroke="#6b6b6b" stroke-width="1"/><line x1="262.2" y1="400.5" x2="268.59999999999997" y2="400.5" stroke="#5a5a5a" stroke-width="1"/><line x1="257.29999999999995" y1="409.5" x2="257.29999999999995" y2="417.5" stroke="#5a5a5a" stroke-width="1"/><path d="M281.5 395.5 A6.6 5.6 0 0 0 281.5 406.5 Z" fill="#cfcfcf" stroke="#6b6b6b" stroke-width="1"/><line x1="283.1" y1="400.5" x2="289.5" y2="400.5" stroke="#5a5a5a" stroke-width="1"/><line x1="278.2" y1="409.5" x2="278.2" y2="417.5" stroke="#5a5a5a" stroke-width="1"/><rect x="299" y="379" width="70" height="54" fill="#fff" stroke="#c6c6c6" stroke-width="3"/><rect x="297.5" y="377.5" width="73" height="57" fill="none" stroke="#5c5c5c" stroke-width="1"/><rect x="306.5" y="395.5" width="17.0" height="21.0" rx="1.5" fill="#cfcfcf" stroke="#6b6b6b" stroke-width="1"/><line x1="311.5" y1="403.5" x2="318.5" y2="403.5" stroke="#5a5a5a" stroke-width="1"/><line x1="309.0" y1="397.5" x2="309.0" y2="401" stroke="#777" stroke-width="0.8"/><rect x="325.5" y="395.5" width="17.0" height="21.0" rx="1.5" fill="#cfcfcf" stroke="#6b6b6b" stroke-width="1"/><line x1="330.5" y1="403.5" x2="337.5" y2="403.5" stroke="#5a5a5a" stroke-width="1"/><line x1="328.0" y1="397.5" x2="328.0" y2="401" stroke="#777" stroke-width="0.8"/><rect x="344.5" y="395.5" width="17.0" height="21.0" rx="1.5" fill="#cfcfcf" stroke="#6b6b6b" stroke-width="1"/><line x1="349.5" y1="403.5" x2="356.5" y2="403.5" stroke="#5a5a5a" stroke-width="1"/><line x1="347.0" y1="397.5" x2="347.0" y2="401" stroke="#777" stroke-width="0.8"/><polygon points="321.5,404 326.5,408.8 321.5,413.5" fill="#fff" stroke="#6b6b6b" stroke-width="1"/><polygon points="340.5,404 345.5,408.8 340.5,413.5" fill="#fff" stroke="#6b6b6b" stroke-width="1"/><rect x="378.5" y="384.5" width="17.0" height="42.0" rx="2" fill="#fff" stroke="#6b6b6b" stroke-width="1"/><line x1="384" y1="392.5" x2="390" y2="392.5" stroke="#5a5a5a" stroke-width="1"/><rect x="381.5" y="400.5" width="11.0" height="10.0" rx="2" fill="#cfcfcf" stroke="#6b6b6b" stroke-width="1"/><rect x="381.5" y="413.5" width="11.0" height="10.0" rx="2" fill="#cfcfcf" stroke="#6b6b6b" stroke-width="1"/><line x1="384" y1="405.5" x2="390" y2="405.5" stroke="#5a5a5a" stroke-width="1"/><line x1="384" y1="418.5" x2="390" y2="418.5" stroke="#5a5a5a" stroke-width="1"/><rect x="397.5" y="384.5" width="17.0" height="42.0" rx="2" fill="#fff" stroke="#6b6b6b" stroke-width="1"/><line x1="403" y1="392.5" x2="409" y2="392.5" stroke="#5a5a5a" stroke-width="1"/><rect x="400.5" y="400.5" width="11.0" height="10.0" rx="2" fill="#cfcfcf" stroke="#6b6b6b" stroke-width="1"/><rect x="400.5" y="413.5" width="11.0" height="10.0" rx="2" fill="#cfcfcf" stroke="#6b6b6b" stroke-width="1"/><line x1="403" y1="405.5" x2="409" y2="405.5" stroke="#5a5a5a" stroke-width="1"/><line x1="403" y1="418.5" x2="409" y2="418.5" stroke="#5a5a5a" stroke-width="1"/><rect x="416.5" y="384.5" width="17.0" height="42.0" rx="2" fill="#fff" stroke="#6b6b6b" stroke-width="1"/><line x1="422" y1="392.5" x2="428" y2="392.5" stroke="#5a5a5a" stroke-width="1"/><rect x="419.5" y="400.5" width="11.0" height="10.0" rx="2" fill="#cfcfcf" stroke="#6b6b6b" stroke-width="1"/><rect x="419.5" y="413.5" width="11.0" height="10.0" rx="2" fill="#cfcfcf" stroke="#6b6b6b" stroke-width="1"/><line x1="422" y1="405.5" x2="428" y2="405.5" stroke="#5a5a5a" stroke-width="1"/><line x1="422" y1="418.5" x2="428" y2="418.5" stroke="#5a5a5a" stroke-width="1"/><rect x="448.5" y="384.5" width="59.0" height="20.5" rx="2" fill="#fff" stroke="#6b6b6b" stroke-width="1"/><rect x="451.5" y="387.5" width="15.0" height="15.0" rx="2" fill="#cfcfcf" stroke="#6b6b6b" stroke-width="1"/><path d="M450.5 405.5 V424.5 Q450.5 426.5 452.5 426.5 H465 Q467 426.5 467 424.5 V405.5" fill="#cfcfcf" stroke="#6b6b6b" stroke-width="1"/><line x1="456" y1="410.5" x2="462" y2="410.5" stroke="#5a5a5a" stroke-width="1"/><rect x="470.5" y="387.5" width="15.0" height="15.0" rx="2" fill="#cfcfcf" stroke="#6b6b6b" stroke-width="1"/><path d="M469.5 405.5 V424.5 Q469.5 426.5 471.5 426.5 H484 Q486 426.5 486 424.5 V405.5" fill="#cfcfcf" stroke="#6b6b6b" stroke-width="1"/><line x1="475" y1="410.5" x2="481" y2="410.5" stroke="#5a5a5a" stroke-width="1"/><rect x="489.5" y="387.5" width="15.0" height="15.0" rx="2" fill="#cfcfcf" stroke="#6b6b6b" stroke-width="1"/><path d="M488.5 405.5 V424.5 Q488.5 426.5 490.5 426.5 H503 Q505 426.5 505 424.5 V405.5" fill="#cfcfcf" stroke="#6b6b6b" stroke-width="1"/><line x1="494" y1="410.5" x2="500" y2="410.5" stroke="#5a5a5a" stroke-width="1"/><rect x="234.5" y="440.5" width="17.0" height="42.0" rx="2" fill="#cfcfcf" stroke="#6b6b6b" stroke-width="1"/><circle cx="242.9" cy="451.7" r="6.2" fill="#fff" stroke="#6b6b6b" stroke-width="1"/><line x1="239.0" y1="466.5" x2="247.0" y2="466.5" stroke="#5a5a5a" stroke-width="1"/><rect x="253.55" y="440.5" width="17.0" height="42.0" rx="2" fill="#cfcfcf" stroke="#6b6b6b" stroke-width="1"/><circle cx="261.95" cy="451.7" r="6.2" fill="#fff" stroke="#6b6b6b" stroke-width="1"/><line x1="258.05" y1="466.5" x2="266.05" y2="466.5" stroke="#5a5a5a" stroke-width="1"/><rect x="272.6" y="440.5" width="17.0" height="42.0" rx="2" fill="#cfcfcf" stroke="#6b6b6b" stroke-width="1"/><circle cx="281.0" cy="451.7" r="6.2" fill="#fff" stroke="#6b6b6b" stroke-width="1"/><line x1="277.1" y1="466.5" x2="285.1" y2="466.5" stroke="#5a5a5a" stroke-width="1"/><polygon points="237.5,475.5 242.5,470.5 242.5,473 282,473 282,470.5 287,475.5 282,480.5 282,478 242.5,478 242.5,480.5" fill="#fff" stroke="#6b6b6b" stroke-width="1"/><rect x="317.5" y="442.5" width="35.0" height="11.0" rx="0" fill="#fff" stroke="#6b6b6b" stroke-width="1"/><rect x="315.5" y="441.5" width="7.0" height="10.0" rx="0" fill="#cfcfcf" stroke="#6b6b6b" stroke-width="1"/><line x1="325" y1="447.5" x2="332" y2="447.5" stroke="#5a5a5a" stroke-width="1"/><rect x="317.5" y="456.5" width="35.0" height="11.0" rx="0" fill="#fff" stroke="#6b6b6b" stroke-width="1"/><rect x="315.5" y="455.5" width="7.0" height="10.0" rx="0" fill="#cfcfcf" stroke="#6b6b6b" stroke-width="1"/><line x1="325" y1="461.5" x2="332" y2="461.5" stroke="#5a5a5a" stroke-width="1"/><rect x="317.5" y="470.5" width="35.0" height="11.0" rx="0" fill="#fff" stroke="#6b6b6b" stroke-width="1"/><rect x="315.5" y="469.5" width="7.0" height="10.0" rx="0" fill="#cfcfcf" stroke="#6b6b6b" stroke-width="1"/><line x1="325" y1="475.5" x2="332" y2="475.5" stroke="#5a5a5a" stroke-width="1"/><rect x="378.5" y="440.5" width="54.0" height="13.0" rx="1" fill="#cfcfcf" stroke="#6b6b6b" stroke-width="1"/><rect x="380.5" y="442.5" width="9.0" height="9.0" rx="0" fill="#fff" stroke="#6b6b6b" stroke-width="1"/><line x1="391" y1="443.5" x2="398" y2="443.5" stroke="#5a5a5a" stroke-width="0.8"/><circle cx="392.5" cy="446.5" r="1.2" fill="#fff" stroke="#6b6b6b" stroke-width="1"/><circle cx="392.5" cy="450.3" r="1.2" fill="#fff" stroke="#6b6b6b" stroke-width="1"/><line x1="395" y1="446.5" x2="399" y2="446.5" stroke="#5a5a5a" stroke-width="0.8"/><line x1="395" y1="450.5" x2="399" y2="450.5" stroke="#5a5a5a" stroke-width="0.8"/><rect x="378.5" y="455.7" width="54.0" height="13.0" rx="1" fill="#cfcfcf" stroke="#6b6b6b" stroke-width="1"/><rect x="380.5" y="457.7" width="9.0" height="9.0" rx="0" fill="#fff" stroke="#6b6b6b" stroke-width="1"/><line x1="391" y1="458.5" x2="398" y2="458.5" stroke="#5a5a5a" stroke-width="0.8"/><circle cx="392.5" cy="461.7" r="1.2" fill="#fff" stroke="#6b6b6b" stroke-width="1"/><circle cx="392.5" cy="465.5" r="1.2" fill="#fff" stroke="#6b6b6b" stroke-width="1"/><line x1="395" y1="461.5" x2="399" y2="461.5" stroke="#5a5a5a" stroke-width="0.8"/><line x1="395" y1="465.5" x2="399" y2="465.5" stroke="#5a5a5a" stroke-width="0.8"/><rect x="378.5" y="470.9" width="54.0" height="13.0" rx="1" fill="#cfcfcf" stroke="#6b6b6b" stroke-width="1"/><rect x="380.5" y="472.9" width="9.0" height="9.0" rx="0" fill="#fff" stroke="#6b6b6b" stroke-width="1"/><line x1="391" y1="473.5" x2="398" y2="473.5" stroke="#5a5a5a" stroke-width="0.8"/><circle cx="392.5" cy="476.9" r="1.2" fill="#fff" stroke="#6b6b6b" stroke-width="1"/><circle cx="392.5" cy="480.7" r="1.2" fill="#fff" stroke="#6b6b6b" stroke-width="1"/><line x1="395" y1="476.5" x2="399" y2="476.5" stroke="#5a5a5a" stroke-width="0.8"/><line x1="395" y1="480.5" x2="399" y2="480.5" stroke="#5a5a5a" stroke-width="0.8"/><rect x="456.5" y="440.5" width="12.0" height="13.0" rx="0" fill="#cfcfcf" stroke="#6b6b6b" stroke-width="1"/><rect x="470.5" y="440.5" width="28.0" height="13.0" rx="0" fill="#cfcfcf" stroke="#6b6b6b" stroke-width="1"/><line x1="480" y1="447.5" x2="488" y2="447.5" stroke="#5a5a5a" stroke-width="1"/><rect x="456.5" y="455.5" width="28.0" height="13.0" rx="0" fill="#cfcfcf" stroke="#6b6b6b" stroke-width="1"/><rect x="486.5" y="455.5" width="12.0" height="13.0" rx="0" fill="#cfcfcf" stroke="#6b6b6b" stroke-width="1"/><line x1="466" y1="461.5" x2="474" y2="461.5" stroke="#5a5a5a" stroke-width="1"/><rect x="456.5" y="470.5" width="12.0" height="13.0" rx="0" fill="#cfcfcf" stroke="#6b6b6b" stroke-width="1"/><rect x="470.5" y="470.5" width="28.0" height="13.0" rx="0" fill="#cfcfcf" stroke="#6b6b6b" stroke-width="1"/><line x1="480" y1="477.5" x2="488" y2="477.5" stroke="#5a5a5a" stroke-width="1"/></g></svg>
<svg class="a" style="left:0;top:0" width="870" height="543"><path d="M95.5 190.5 H103 L106.5 195 L103 199.5 H95.5 L98.5 195 Z" fill="#e6e6e6" stroke="#474747" stroke-width="1.2"/><rect x="102.5" y="197.5" width="9" height="8.5" fill="#fff" stroke="#474747" stroke-width="1.2"/><line x1="104" y1="199.8" x2="105.2" y2="199.8" stroke="#474747" stroke-width="1"/><line x1="106.2" y1="199.8" x2="110.3" y2="199.8" stroke="#474747" stroke-width="1"/><line x1="104" y1="202" x2="105.2" y2="202" stroke="#474747" stroke-width="1"/><line x1="106.2" y1="202" x2="110.3" y2="202" stroke="#474747" stroke-width="1"/><line x1="104" y1="204.2" x2="105.2" y2="204.2" stroke="#474747" stroke-width="1"/><line x1="106.2" y1="204.2" x2="110.3" y2="204.2" stroke="#474747" stroke-width="1"/><rect x="96.5" y="214.5" width="3" height="3.5" fill="#bdbdbd" stroke="#474747" stroke-width="1"/><rect x="101.5" y="214.5" width="10" height="3.5" fill="#bdbdbd" stroke="#474747" stroke-width="1"/><rect x="96.5" y="219.5" width="3" height="3.5" fill="#bdbdbd" stroke="#474747" stroke-width="1"/><rect x="101.5" y="219.5" width="10" height="3.5" fill="#bdbdbd" stroke="#474747" stroke-width="1"/><rect x="96.5" y="224.5" width="3" height="3.5" fill="#bdbdbd" stroke="#474747" stroke-width="1"/><rect x="101.5" y="224.5" width="10" height="3.5" fill="#bdbdbd" stroke="#474747" stroke-width="1"/><polygon points="96,243.5 98.3,243.5 98.3,241.5 101.3,245 98.3,248.5 98.3,246.5 96,246.5" fill="#d0d0d0" stroke="#474747" stroke-width="1"/><polygon points="101.3,243.5 103.6,243.5 103.6,241.5 106.6,245 103.6,248.5 103.6,246.5 101.3,246.5" fill="#d0d0d0" stroke="#474747" stroke-width="1"/><polygon points="106.6,243.5 108.89999999999999,243.5 108.89999999999999,241.5 111.89999999999999,245 108.89999999999999,248.5 108.89999999999999,246.5 106.6,246.5" fill="#d0d0d0" stroke="#474747" stroke-width="1"/><rect x="98.5" y="263.5" width="3" height="3" fill="#e0e0e0" stroke="#474747" stroke-width="1.2"/><rect x="108.5" y="267.5" width="3" height="3" fill="#e0e0e0" stroke="#474747" stroke-width="1.2"/><rect x="101.5" y="274.5" width="3" height="3" fill="#e0e0e0" stroke="#474747" stroke-width="1.2"/><path d="M103.5 265.5 H108.5 V262.8" fill="none" stroke="#474747" stroke-width="1.2"/><path d="M109.8 271.5 L106.5 275.5 M106.5 272.5 V275.5 H109.5" fill="none" stroke="#474747" stroke-width="1.2"/><path d="M96.5 269 H100 M98 268 L97 271.5 L100.5 274" fill="none" stroke="#474747" stroke-width="1.4"/><rect x="100.5" y="287.5" width="7" height="3.5" fill="#ddd" stroke="#474747" stroke-width="1"/><path d="M104 291 V294 M97.5 297 V294 H110.5 V297 M104 294 V297" fill="none" stroke="#474747" stroke-width="1"/><rect x="96" y="297.5" width="3.5" height="3.5" fill="#ddd" stroke="#474747" stroke-width="1"/><rect x="102.5" y="297.5" width="3.5" height="3.5" fill="#ddd" stroke="#474747" stroke-width="1"/><rect x="109" y="297.5" width="3.5" height="3.5" fill="#ddd" stroke="#474747" stroke-width="1"/><rect x="96.5" y="310.5" width="14" height="15" fill="#fff" stroke="#474747" stroke-width="1.2"/><rect x="97" y="318" width="13" height="7" fill="#c8c8c8"/><line x1="96.5" y1="318" x2="110.5" y2="318" stroke="#474747" stroke-width="1"/><path d="M100 317 V312.5 M98.3 314.2 L100 312.5 L101.7 314.2 M107 319 V323.5 M105.3 321.8 L107 323.5 L108.7 321.8" fill="none" stroke="#474747" stroke-width="1"/><rect x="98.5" y="336.5" width="4" height="4" rx="0.8" fill="#d4d4d4" stroke="#474747" stroke-width="1.1"/><rect x="105.5" y="336.5" width="4" height="4" rx="0.8" fill="#d4d4d4" stroke="#474747" stroke-width="1.1"/><rect x="98.5" y="343.5" width="4" height="4" rx="0.8" fill="#d4d4d4" stroke="#474747" stroke-width="1.1"/><rect x="105.5" y="343.5" width="4" height="4" rx="0.8" fill="#d4d4d4" stroke="#474747" stroke-width="1.1"/><path d="M102.3 334.5 h3.4 v5.8 h5.8 v3.4 h-5.8 v5.8 h-3.4 v-5.8 h-5.8 v-3.4 h5.8 z" fill="#fff" stroke="#474747" stroke-width="1.1"/><polygon points="104,357.5 111.5,372.5 96,372.5" fill="#fff" stroke="#474747" stroke-width="1"/><line x1="101.8" y1="361.5" x2="106.2" y2="361.5" stroke="#474747" stroke-width="1.6"/><line x1="100.0" y1="365" x2="108.0" y2="365" stroke="#474747" stroke-width="1.6"/><line x1="98.2" y1="368.5" x2="109.8" y2="368.5" stroke="#474747" stroke-width="1.6"/><line x1="96.7" y1="371.5" x2="111.3" y2="371.5" stroke="#474747" stroke-width="1.6"/><rect x="97.5" y="383.5" width="13" height="13" fill="#fff" stroke="#474747" stroke-width="1.2"/><path d="M99 395.5 L102.5 390 L105 393 L107 391 L109.5 395.5 Z" fill="#666"/><circle cx="106.5" cy="386.8" r="0.9" fill="#666"/></svg>
<svg class="a" style="left:0;top:0" width="870" height="543">
<defs><linearGradient id="sh" gradientUnits="userSpaceOnUse" x1="762" y1="488" x2="758" y2="480">
<stop offset="0" stop-color="#000" stop-opacity="0.12"/><stop offset="1" stop-color="#000" stop-opacity="0"/></linearGradient></defs>
<polygon points="654,543 870,433 870,420 628,543" fill="url(#sh)"/>
<polygon points="654,543 870,433 870,543" fill="#fefefe"/>
<line x1="654" y1="543" x2="870" y2="433" stroke="#5a5a5a" stroke-width="1.3"/>
</svg>
</body></html>
